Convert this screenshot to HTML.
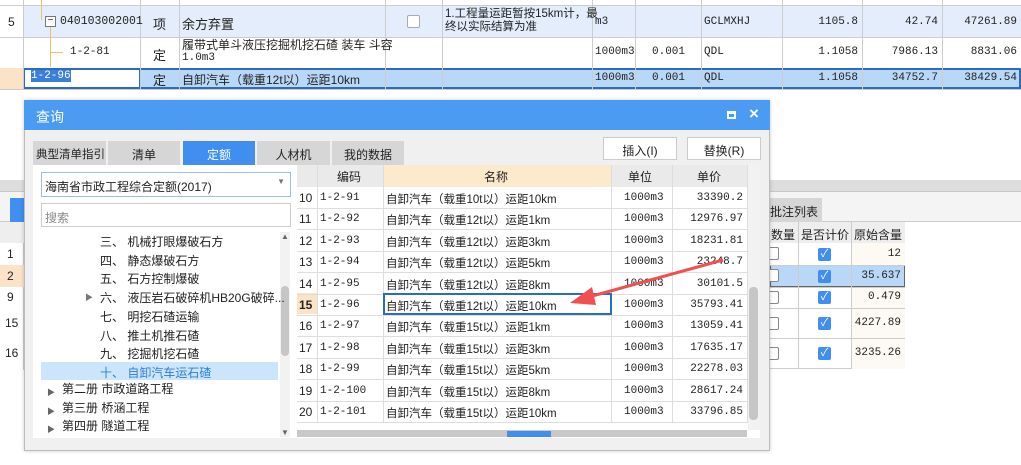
<html><head><style>
body{margin:0;width:1021px;height:465px;position:relative;overflow:hidden;background:#fff;font-family:"Liberation Sans","Noto Sans CJK SC",sans-serif;font-size:12px;color:#222}
div{box-sizing:border-box}
.a{position:absolute}
.m{font-family:"Liberation Mono","Noto Sans CJK SC",monospace;font-size:11px}
.r{text-align:right;padding-right:4px}
.cb{position:absolute;width:13px;height:13px;border:1px solid #888;border-radius:2px;background:#fff}
.ck{position:absolute;width:13px;height:13px;border-radius:2px;background:#3f8ef0;color:#fff;font-size:11px;line-height:13px;text-align:center}
.tab{position:absolute;top:141px;height:24px;background:#d6d6d6;text-align:center;padding-top:5px;font-size:12px}
</style></head><body>
<!-- top table -->
<div class="a" style="left:0;top:0;width:1021px;height:6px;border-bottom:1px solid #ccc"></div>
<div class="a" style="left:23px;top:6px;width:998px;height:31px;background:#e3edfb"></div>
<div class="a" style="left:23px;top:68px;width:998px;height:21px;background:#b9d8f7;border:2px solid #2b6bc4"></div>
<div class="a" style="left:23px;top:68px;width:118px;height:21px;background:#fff;border:2px solid #2b6bc4"></div>
<div class="a" style="left:0;top:68px;width:23px;height:21px;background:#fbe3c8"></div>
<div class="a" style="left:0;top:37px;width:1021px;height:1px;background:#ccc"></div>
<div class="a" style="left:0;top:89px;width:1021px;height:1px;background:#ccc"></div>
<div class="a" style="left:23px;top:0;width:1px;height:90px;background:#ccc"></div>
<div class="a" style="left:140px;top:0;width:1px;height:90px;background:#ccc"></div>
<div class="a" style="left:179px;top:0;width:1px;height:90px;background:#ccc"></div>
<div class="a" style="left:385px;top:0;width:1px;height:90px;background:#ccc"></div>
<div class="a" style="left:442px;top:0;width:1px;height:90px;background:#ccc"></div>
<div class="a" style="left:592px;top:0;width:1px;height:90px;background:#ccc"></div>
<div class="a" style="left:635px;top:0;width:1px;height:90px;background:#ccc"></div>
<div class="a" style="left:701px;top:0;width:1px;height:90px;background:#ccc"></div>
<div class="a" style="left:782px;top:0;width:1px;height:90px;background:#ccc"></div>
<div class="a" style="left:862px;top:0;width:1px;height:90px;background:#ccc"></div>
<div class="a" style="left:942px;top:0;width:1px;height:90px;background:#ccc"></div>
<div class="a" style="left:41px;top:0;width:1px;height:20px;background:#f0c070"></div>
<div class="a" style="left:50px;top:27px;width:1px;height:40px;background:#f0c070"></div>
<div class="a" style="left:51px;top:52px;width:12px;height:1px;background:#f0c070"></div>
<div class="a" style="left:45px;top:16px;width:11px;height:11px;border:1px solid #777;background:#fff;font-size:10px;line-height:8px;text-align:center">−</div>
<div class="a" style="left:8px;top:15px">5</div>
<div class="a m" style="left:60px;top:15px;font-size:11.5px">040103002001</div>
<div class="a" style="left:153px;top:14px;font-size:13px">项</div>
<div class="a" style="left:182px;top:14px;font-size:13px">余方弃置</div>
<div class="cb" style="left:407px;top:15px;border-color:#aaa"></div>
<div class="a" style="left:445px;top:8px;font-size:11.5px;line-height:13px">1.工程量运距暂按15km计，最<br>终以实际结算为准</div>
<div class="a m" style="left:595px;top:16px">m3</div>
<div class="a m" style="left:704px;top:16px">GCLMXHJ</div>
<div class="a m r" style="left:782px;top:16px;width:80px">1105.8</div>
<div class="a m r" style="left:862px;top:16px;width:80px">42.74</div>
<div class="a m r" style="left:942px;top:16px;width:79px">47261.89</div>
<div class="a m" style="left:70px;top:46px">1-2-81</div>
<div class="a" style="left:153px;top:45px;font-size:13px">定</div>
<div class="a" style="left:182px;top:39px;font-size:12px;line-height:13px">履带式单斗液压挖掘机挖石碴 装车 斗容<br><span class="m">1.0m3</span></div>
<div class="a m" style="left:595px;top:46px">1000m3</div>
<div class="a m" style="left:652px;top:46px">0.001</div>
<div class="a m" style="left:704px;top:46px">QDL</div>
<div class="a m r" style="left:782px;top:46px;width:80px">1.1058</div>
<div class="a m r" style="left:862px;top:46px;width:80px">7986.13</div>
<div class="a m r" style="left:942px;top:46px;width:79px">8831.06</div>
<div class="a m" style="left:31px;top:70px;background:#3b7fd8;color:#fff">1-2-96</div>
<div class="a" style="left:153px;top:70px;font-size:13px">定</div>
<div class="a" style="left:182px;top:71px;font-size:12px">自卸汽车（载重12t以）运距10km</div>
<div class="a m" style="left:595px;top:72px">1000m3</div>
<div class="a m" style="left:652px;top:72px">0.001</div>
<div class="a m" style="left:704px;top:72px">QDL</div>
<div class="a m r" style="left:782px;top:72px;width:80px">1.1058</div>
<div class="a m r" style="left:862px;top:72px;width:80px">34752.7</div>
<div class="a m r" style="left:942px;top:72px;width:79px">38429.54</div>
<!-- behind panel -->
<div class="a" style="left:0;top:180px;width:1021px;height:12px;background:#ddd;border-bottom:1px solid #c8c8c8"></div>
<div class="a" style="left:0;top:192px;width:1021px;height:30px;background:#f4f4f4;border-bottom:1px solid #ccc"></div>
<div class="a" style="left:10px;top:198px;width:14px;height:24px;background:#3f8ef0"></div>
<div class="a" style="left:765px;top:198px;width:57px;height:24px;background:#d6d6d6;padding:5px 0 0 5px">批注列表</div>
<div class="a" style="left:0;top:222px;width:24px;height:148px;border-right:1px solid #ccc"></div>
<div class="a" style="left:0;top:222px;width:24px;height:21px;background:#eee"></div>
<div class="a" style="left:0;top:265px;width:24px;height:22px;background:#fbe3c8"></div>
<div class="a" style="left:7px;top:247px">1</div><div class="a" style="left:7px;top:269px">2</div><div class="a" style="left:7px;top:290px">9</div><div class="a" style="left:5px;top:316px">15</div><div class="a" style="left:5px;top:346px">16</div>
<div class="a" style="left:770px;top:222px;width:135px;height:147px;border-right:1px solid #ccc;border-bottom:1px solid #ccc"></div>
<div class="a" style="left:770px;top:222px;width:135px;height:21px;background:#eee"></div>
<div class="a" style="left:851px;top:243px;width:54px;height:126px;background:#fdfaf3"></div>
<div class="a" style="left:770px;top:265px;width:135px;height:22px;background:#b9d8f7;border:1px solid #666"></div>
<div class="a" style="left:771px;top:226px;font-size:12px">数量</div><div class="a" style="left:801px;top:226px;font-size:12px">是否计价</div><div class="a" style="left:854px;top:226px;font-size:12px">原始含量</div>
<div class="a" style="left:798px;top:222px;width:1px;height:147px;background:#ccc"></div>
<div class="a" style="left:851px;top:222px;width:1px;height:147px;background:#ccc"></div>
<div class="a" style="left:770px;top:265px;width:135px;height:1px;background:#ccc"></div>
<div class="a" style="left:770px;top:287px;width:135px;height:1px;background:#ccc"></div>
<div class="a" style="left:770px;top:308px;width:135px;height:1px;background:#ccc"></div>
<div class="a" style="left:770px;top:338px;width:135px;height:1px;background:#ccc"></div>
<div class="cb" style="left:766px;top:247px"></div><div class="cb" style="left:766px;top:269px"></div><div class="cb" style="left:766px;top:291px"></div><div class="cb" style="left:766px;top:317px"></div><div class="cb" style="left:766px;top:347px"></div>
<div class="ck" style="left:818px;top:248px">✓</div><div class="ck" style="left:818px;top:270px">✓</div><div class="ck" style="left:818px;top:291px">✓</div><div class="ck" style="left:818px;top:317px">✓</div><div class="ck" style="left:818px;top:347px">✓</div>
<div class="a m r" style="left:851px;top:248px;width:54px">12</div>
<div class="a m r" style="left:851px;top:270px;width:54px">35.637</div>
<div class="a m r" style="left:851px;top:291px;width:54px">0.479</div>
<div class="a m r" style="left:851px;top:317px;width:54px">4227.89</div>
<div class="a m r" style="left:851px;top:347px;width:54px">3235.26</div>
<!-- dialog -->
<div class="a" style="left:24px;top:100px;width:746px;height:351px;background:#f0f0f0;border:1px solid #bbb;box-shadow:0 0 4px rgba(0,0,0,.2)"></div>
<div class="a" style="left:24px;top:100px;width:746px;height:30px;background:#4b9bf2;color:#fff;font-size:14px;padding:7px 0 0 12px">查询</div>
<div class="a" style="left:727px;top:111px;width:9px;height:8px;border:2px solid #fff;border-top-width:3px"></div>
<div class="a" style="left:749px;top:104px;color:#fff;font-size:17px;font-weight:bold">×</div>
<div class="tab" style="left:33px;width:73px;font-size:11.5px;text-align:left;padding-left:3px">典型清单指引</div>
<div class="tab" style="left:108px;width:72px">清单</div>
<div class="tab" style="left:183px;width:72px;background:#3f8ef0;color:#fff">定额</div>
<div class="tab" style="left:257px;width:73px">人材机</div>
<div class="tab" style="left:332px;width:72px">我的数据</div>
<div class="a" style="left:603px;top:137px;width:74px;height:23px;background:#fff;border:1px solid #ccc;text-align:center;padding-top:4px;font-size:12px">插入(I)</div>
<div class="a" style="left:687px;top:137px;width:74px;height:23px;background:#fff;border:1px solid #ccc;text-align:center;padding-top:4px;font-size:12px">替换(R)</div>
<!-- left panel -->
<div class="a" style="left:33px;top:165px;width:264px;height:273px;background:#fff"></div>
<div class="a" style="left:41px;top:172px;width:250px;height:25px;border:1px solid #9bbde6;padding:5px 0 0 3px;font-size:12px">海南省市政工程综合定额(2017)<span style="position:absolute;right:5px;top:4px;font-size:8px;color:#777">▼</span></div>
<div class="a" style="left:41px;top:203px;width:250px;height:24px;border:1px solid #ccc;padding:5px 0 0 3px;color:#888;font-size:12px">搜索</div>
<div class="a" style="left:41px;top:362px;width:237px;height:18px;background:#cde5fb"></div>
<div class="a" style="left:280px;top:232px;width:10px;height:205px;background:#f2f2f2"></div>
<div class="a" style="left:281px;top:286px;width:8px;height:70px;background:#c6c6c6;border-radius:4px"></div>
<div class="a" style="left:281px;top:232px;font-size:8px;color:#666">▲</div><div class="a" style="left:281px;top:428px;font-size:8px;color:#666">▼</div>
<div class="a" style="left:100px;top:233px;font-size:12px;line-height:18.7px">三、 机械打眼爆破石方<br>四、 静态爆破石方<br>五、 石方控制爆破<br>六、 液压岩石破碎机HB20G破碎...<br>七、 明挖石碴运输<br>八、 推土机推石碴<br>九、 挖掘机挖石碴<br><span style="color:#2a7fd8">十、 自卸汽车运石碴</span></div>
<div class="a" style="left:85px;top:292px;font-size:8px;color:#777">▶</div>
<div class="a" style="left:47px;top:384px;font-size:8px;color:#666;line-height:18.5px">▶<br>▶<br>▶</div>
<div class="a" style="left:62px;top:380px;font-size:12px;line-height:18.5px">第二册 市政道路工程<br>第三册 桥涵工程<br>第四册 隧道工程</div>
<!-- right table -->
<div class="a" style="left:297px;top:165px;width:463px;height:273px;background:#fff"></div>
<div class="a" style="left:297px;top:165px;width:450px;height:22px;background:#eaeaea"></div>
<div class="a" style="left:383px;top:165px;width:228px;height:22px;background:#fde9cb"></div>
<div class="a" style="left:337px;top:168px;font-size:12px">编码</div><div class="a" style="left:484px;top:168px;font-size:12px">名称</div><div class="a" style="left:628px;top:168px;font-size:12px">单位</div><div class="a" style="left:697px;top:168px;font-size:12px">单价</div>
<div class="a" style="left:297px;top:293px;width:20px;height:21px;background:#fbe3c8"></div>
<div id="rows"></div>
<div class="a" style="left:317px;top:165px;width:1px;height:258px;background:#ddd"></div>
<div class="a" style="left:383px;top:165px;width:1px;height:258px;background:#ddd"></div>
<div class="a" style="left:611px;top:165px;width:1px;height:258px;background:#ddd"></div>
<div class="a" style="left:672px;top:165px;width:1px;height:258px;background:#ddd"></div>
<div class="a" style="left:747px;top:165px;width:1px;height:258px;background:#ddd"></div>
<div class="a" style="left:383px;top:293px;width:229px;height:22px;border:2px solid #2b6bc4"></div>
<div class="a" style="left:748px;top:165px;width:12px;height:265px;background:#f2f2f2"></div>
<div class="a" style="left:749px;top:287px;width:9px;height:133px;background:#c6c6c6;border-radius:4px"></div>
<div class="a" style="left:297px;top:430px;width:450px;height:7px;background:#c8c8c8"></div>
<div class="a" style="left:507px;top:431px;width:44px;height:6px;background:#3f8ef0"></div>
<svg class="a" style="left:0;top:0" width="1021" height="465"><line x1="723" y1="260" x2="585" y2="298" stroke="#f05050" stroke-width="3"/><polygon points="570,303 592,287 596,305" fill="#f05050"/></svg>
<script>
var d=[["10","1-2-91","自卸汽车（载重10t以）运距10km","33390.2"],["11","1-2-92","自卸汽车（载重12t以）运距1km","12976.97"],["12","1-2-93","自卸汽车（载重12t以）运距3km","18231.81"],["13","1-2-94","自卸汽车（载重12t以）运距5km","23248.7"],["14","1-2-95","自卸汽车（载重12t以）运距8km","30101.5"],["15","1-2-96","自卸汽车（载重12t以）运距10km","35793.41"],["16","1-2-97","自卸汽车（载重15t以）运距1km","13059.41"],["17","1-2-98","自卸汽车（载重15t以）运距3km","17635.17"],["18","1-2-99","自卸汽车（载重15t以）运距5km","22278.03"],["19","1-2-100","自卸汽车（载重15t以）运距8km","28617.24"],["20","1-2-101","自卸汽车（载重15t以）运距10km","33796.85"]];
var h="";d.forEach(function(r,i){var t=187+i*21.4;h+='<div class="a" style="left:297px;top:'+(t+21)+'px;width:450px;height:1px;background:#ddd"></div>'+
'<div class="a" style="left:299px;top:'+(t+4)+'px;'+(i==5?'font-weight:bold':'')+'">'+r[0]+'</div><div class="a m" style="left:320px;top:'+(t+5)+'px">'+r[1]+'</div><div class="a" style="left:386px;top:'+(t+4)+'px;font-size:11.5px">'+r[2]+'</div><div class="a m" style="left:624px;top:'+(t+5)+'px">1000m3</div><div class="a m r" style="left:672px;top:'+(t+5)+'px;width:75px">'+r[3]+'</div>';});
document.getElementById("rows").outerHTML=h;
</script>
</body></html>
